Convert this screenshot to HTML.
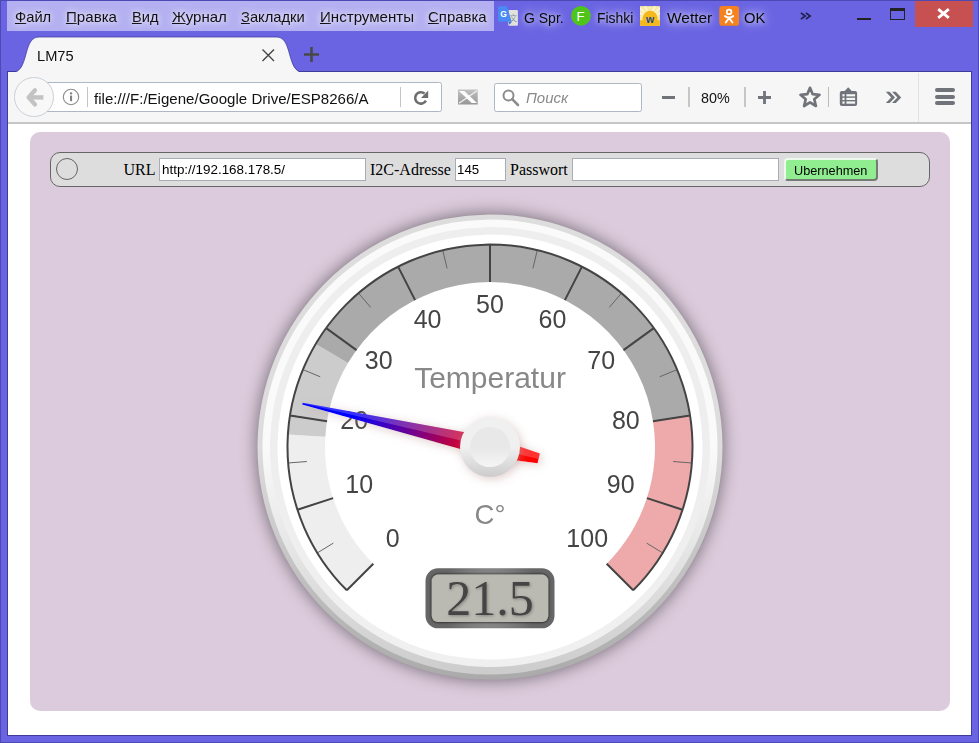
<!DOCTYPE html>
<html lang="de"><head><meta charset="utf-8"><title>LM75</title>
<style>
html,body{margin:0;padding:0}
body{width:979px;height:743px;overflow:hidden;position:relative;background:#6a64e2;font-family:"Liberation Sans",Arial,sans-serif;color:#000}
.abs,.t{position:absolute}
.t{white-space:nowrap;line-height:1;transform-origin:0 0}
#frame{left:0;top:0;width:977px;height:741px;border:1px solid #4c48b4}
#menubar{left:7px;top:1px;width:487px;height:30px;background:#b4b0f1}
.menu{font-size:15px;top:9px;color:#111;text-shadow:0 0 7px rgba(255,255,255,.7),0 0 11px rgba(255,255,255,.5),0 0 4px rgba(255,255,255,.3)}
.menu u{text-decoration:underline;text-underline-offset:1px}
.bm{font-size:15px;top:10px;color:#0a0a0a;text-shadow:0 0 9px rgba(255,255,255,.8),0 0 14px rgba(255,255,255,.55),0 0 5px rgba(255,255,255,.35)}
#nav{left:8px;top:72px;width:963px;height:50px;background:#f6f6f6}
#navline{left:8px;top:122px;width:963px;height:2px;background:#c6c6c6}
#content{left:8px;top:124px;width:963px;height:611px;background:#fff}
#inner{left:7px;top:71px;width:965px;height:665px;background:#3f3c99}
#panel{left:30px;top:132px;width:920px;height:579px;background:#dccbdc;border-radius:10px}
#bar{left:50px;top:152px;width:878px;height:33px;background:#ddd;border:1px solid #666;border-radius:10px}
.lbl{font-family:"Liberation Serif","Times New Roman",serif;font-size:16px;color:#000}
.inp{background:#fff;border:1px solid #a8acb5;box-sizing:border-box;height:23px;top:158px}
.inptxt{font-size:12.8px;color:#000}
.gauge{position:absolute;left:240px;top:197px;overflow:visible;will-change:transform}
#urlbar{left:38px;top:82px;width:402px;height:28px;background:#fff;border:1px solid #aeb7c4;border-radius:2.5px;box-sizing:content-box}
#search{left:494px;top:83px;width:146px;height:27px;background:#fff;border:1px solid #aeb7c4;border-radius:2.5px}
.sep{width:1px;background:#c4c4c4}
</style></head><body>
<div id="frame" class="abs"></div>
<div id="menubar" class="abs"></div>
<span class="t menu" style="left:14.6px;transform:scaleX(0.9813);"><u>Ф</u>айл</span>
<span class="t menu" style="left:65.7px;transform:scaleX(1.0065);"><u>П</u>равка</span>
<span class="t menu" style="left:131.6px;transform:scaleX(0.9758);"><u>В</u>ид</span>
<span class="t menu" style="left:172.2px;transform:scaleX(1.0009);"><u>Ж</u>урнал</span>
<span class="t menu" style="left:241.2px;transform:scaleX(0.9825);"><u>З</u>акладки</span>
<span class="t menu" style="left:319.8px;transform:scaleX(1.0061);"><u>И</u>нструменты</span>
<span class="t menu" style="left:428.4px;transform:scaleX(0.9956);"><u>С</u>правка</span>
<!-- bookmarks -->
<svg class="abs" style="left:496px;top:4px" width="24" height="24" viewBox="496 4 24 24"><rect x="508.3" y="10.1" width="9.6" height="15.6" rx="1" fill="#e3e2da"/><path d="M508.4 21.4H512L509.6 24.8Z" fill="#3b6fd1"/><text x="509.6" y="21" font-size="7.5" fill="#7f95a5" font-family="Liberation Sans,Noto Sans CJK SC,sans-serif">文</text><path d="M499 6.2H506.2Q507 6.2 507.3 7.1L511.3 20.4Q511.6 21.4 510.5 21.4H499Q498 21.4 498 20.4V7.2Q498 6.2 499 6.2Z" fill="#4a8af4"/><text x="500.3" y="17" font-size="8.5" font-weight="bold" fill="#fff" font-family="Liberation Sans,sans-serif">G</text></svg>
<span class="t bm" style="left:523.6px;transform:scaleX(0.9334);">G Spr.</span>
<svg class="abs" style="left:570px;top:5px" width="22" height="22" viewBox="570 5 22 22"><circle cx="581" cy="15.8" r="9.9" fill="#4fc41a"/><text x="580.6" y="20.6" text-anchor="middle" font-size="13.2" fill="#fff" font-family="Liberation Sans,sans-serif">F</text></svg>
<span class="t bm" style="left:596.6px;transform:scaleX(0.9267);">Fishki</span>
<svg class="abs" style="left:640px;top:6px" width="20" height="20" viewBox="640 6 20 20"><rect x="640" y="6.1" width="19.9" height="19.6" fill="#f8e9a6"/><path d="M650 18L640 8M650 18L645 6M650 18L655 6M650 18L660 8M650 18L640 13M650 18L660 13" stroke="#fdf6d6" stroke-width="1.6"/><circle cx="650.1" cy="18.4" r="7.6" fill="#f6b91c"/><rect x="640" y="20.2" width="19.9" height="5.5" fill="#f6b91c"/><text x="650" y="23.4" text-anchor="middle" font-size="10.5" font-weight="bold" fill="#1d4a86" font-family="Liberation Sans,sans-serif">w</text></svg>
<span class="t bm" style="left:666.8px;transform:scaleX(1.0295);">Wetter</span>
<svg class="abs" style="left:719px;top:6px" width="21" height="20" viewBox="719 6 21 20"><rect x="719.3" y="6.1" width="19.8" height="19.6" rx="2.8" fill="#f5821f"/><circle cx="729.1" cy="11.9" r="2.3" fill="none" stroke="#fff" stroke-width="1.8"/><path d="M725 16.1Q729.1 19 733.2 16.1M729.1 18L725.8 22.4M729.1 18L732.4 22.4" fill="none" stroke="#fff" stroke-width="1.9" stroke-linecap="round"/></svg>
<span class="t bm" style="left:744.2px;transform:scaleX(0.9867);">OK</span>
<svg class="abs" style="left:799px;top:10px" width="14" height="12" viewBox="799 10 14 12"><path d="M801.4 13.3L805.2 16L801.4 18.7M806.4 13.3L810.2 16L806.4 18.7" fill="none" stroke="#25234f" stroke-width="1.7" stroke-linecap="round"/></svg>
<!-- window buttons -->
<div class="abs" style="left:857px;top:18px;width:14px;height:2px;background:#222"></div>
<div class="abs" style="left:890px;top:8px;width:13px;height:8px;border:1px solid #222;border-top-width:3px"></div>
<div class="abs" style="left:915px;top:1px;width:58px;height:26px;background:#c75050"></div>
<svg class="abs" style="left:936px;top:7px" width="15" height="13" viewBox="0 0 15 13"><path d="M2.2 2.2L12.8 10.8M12.8 2.2L2.2 10.8" stroke="#fff" stroke-width="2.9" fill="none"/></svg>
<!-- tab -->
<div id="inner" class="abs"></div>
<svg class="abs" style="left:0;top:30px" width="320" height="44" viewBox="0 30 320 44"><path d="M8 72.5L12.5 72.5C20.5 72.5 23 65 26 54C29 43 31.5 37 39.5 37L276 37C284 37 286.5 43 289.5 54C292.5 65 295 72.5 303 72.5L308 72.5Z" fill="#f6f6f6"/><path d="M8 72L12.5 72C20.5 72 23 65 26 54C29 43 31.5 37 39.5 37L276 37C284 37 286.5 43 289.5 54C292.5 65 295 72 303 72L308 72" fill="none" stroke="#3f3c9c" stroke-opacity=".75" stroke-width="1"/></svg>
<span class="t" style="left:37.4px;transform:scaleX(0.9752);top:48px;font-size:15px;color:#111">LM75</span>
<svg class="abs" style="left:261px;top:48px" width="15" height="15" viewBox="0 0 15 15"><path d="M1.5 1.5L13 13M13 1.5L1.5 13" stroke="#444" stroke-width="1.4" fill="none"/></svg>
<svg class="abs" style="left:303.2px;top:45.8px" width="17" height="17" viewBox="0 0 17 17"><path d="M8.5 1V16M1 8.5H16" stroke="#484848" stroke-width="2.6" fill="none"/></svg>
<!-- nav bar -->
<div id="nav" class="abs"></div>
<div id="navline" class="abs"></div>
<div id="urlbar" class="abs"></div>
<div class="abs" style="left:14.4px;top:77.4px;width:37.6px;height:37.6px;border-radius:50%;background:#f8f8f8;border:1px solid #c9d0d8"></div>
<svg class="abs" style="left:24px;top:86px" width="22" height="23" viewBox="0 0 22 23"><path d="M11 4.3L4.6 11.4L11 18.5" fill="none" stroke="#c3c3c3" stroke-width="4.3" stroke-linejoin="round" stroke-linecap="round"/><path d="M5 11.4H19.4" fill="none" stroke="#c3c3c3" stroke-width="4.4"/></svg>
<svg class="abs" style="left:62px;top:88px" width="18" height="18" viewBox="0 0 18 18"><circle cx="9" cy="9" r="7.7" fill="none" stroke="#8c8c8c" stroke-width="1.1"/><rect x="8" y="7.4" width="2.1" height="5.8" rx=".6" fill="#808080"/><rect x="7.9" y="4.2" width="2.3" height="2.2" rx="1" fill="#808080"/></svg>
<div class="abs sep" style="left:87px;top:87px;height:20px"></div>
<span class="t" style="left:94.2px;transform:scaleX(1.0041);top:91px;font-size:15px;color:#111">file:///F:/Eigene/Google Drive/ESP8266/A</span>
<div class="abs sep" style="left:400px;top:87px;height:20px"></div>
<svg class="abs" style="left:410px;top:88px" width="20" height="20" viewBox="410 88 20 20"><path d="M424.6 93.6A5.7 5.7 0 1 0 425.9 100.6" fill="none" stroke="#6e6e6e" stroke-width="2.6"/><path d="M421 98H428.2V90.6Z" fill="#6e6e6e"/></svg>
<svg class="abs" style="left:458px;top:89px" width="20" height="16" viewBox="0 0 20 16"><defs><linearGradient id="mg" x1="0" y1="0" x2="0" y2="1"><stop offset="0" stop-color="#c2c2c2"/><stop offset="1" stop-color="#969696"/></linearGradient></defs><rect x="0" y="0.5" width="19.7" height="15" fill="url(#mg)"/><path d="M1 14.2L19 1.8" stroke="#f2f2f2" stroke-width="1.2" fill="none"/><path d="M0.9 2L6.3 2L19.1 14L13.7 14Z" fill="#fdfdfd"/></svg>
<div id="search" class="abs"></div>
<svg class="abs" style="left:501px;top:88px" width="20" height="20" viewBox="0 0 20 20"><circle cx="7.5" cy="7.5" r="5" fill="none" stroke="#8c8c8c" stroke-width="2"/><path d="M11.2 11.2L17 17" stroke="#8c8c8c" stroke-width="2.6" stroke-linecap="round"/></svg>
<span class="t" style="left:525.5px;transform:scaleX(0.9967);top:90px;font-size:15px;font-style:italic;color:#8a8a8a">Поиск</span>
<div class="abs" style="left:662px;top:96px;width:13px;height:3px;background:#70747a"></div>
<div class="abs sep" style="left:688px;top:87px;height:20px;width:2px;background:#c6c6c6"></div>
<span class="t" style="left:701.3px;transform:scaleX(0.9557);top:90px;font-size:15px;color:#111">80%</span>
<div class="abs sep" style="left:744px;top:87px;height:20px;width:2px;background:#c6c6c6"></div>
<svg class="abs" style="left:757px;top:90px" width="15" height="15" viewBox="0 0 15 15"><path d="M7.5 1V14M1 7.5H14" stroke="#70747a" stroke-width="2.8" fill="none"/></svg>
<svg class="abs" style="left:798px;top:85px" width="24" height="24" viewBox="0 0 24 24"><path d="M12 2.8L14.7 9.2L21.5 9.8L16.3 14.3L17.9 21L12 17.4L6.1 21L7.7 14.3L2.5 9.8L9.3 9.2Z" fill="none" stroke="#70747a" stroke-width="2.7" stroke-linejoin="round"/></svg>
<div class="abs sep" style="left:828px;top:87px;height:20px;background:#bbb"></div>
<svg class="abs" style="left:838px;top:86px" width="21" height="22" viewBox="838 86 21 22"><path d="M844.2 91.6L848.2 87.2L852.2 91.6Z" fill="#70747a"/><rect x="839.8" y="91.1" width="17.3" height="15" rx="2" fill="#70747a"/><g fill="#f6f6f6"><rect x="842.4" y="94.2" width="2.2" height="2.2"/><rect x="846.4" y="94.2" width="8.7" height="2.2"/><rect x="842.4" y="97.8" width="2.2" height="2.2"/><rect x="846.4" y="97.8" width="8.7" height="2.2"/><rect x="842.4" y="101.4" width="2.2" height="2.3"/><rect x="846.4" y="101.4" width="8.7" height="2.3"/></g></svg>
<svg class="abs" style="left:884px;top:90px" width="19" height="15" viewBox="884 90 19 15"><path d="M885.8 91.8H889.6L895 97.4L889.6 103H885.8L891.2 97.4ZM892 91.8H895.8L901.2 97.4L895.8 103H892L897.4 97.4Z" fill="#70747a"/></svg>
<div class="abs sep" style="left:918px;top:73px;height:49px;background:#e2e2e2"></div>
<div class="abs" style="left:935px;top:88.3px;width:20px;height:3.8px;border-radius:2px;background:#70747a"></div>
<div class="abs" style="left:935px;top:94.9px;width:20px;height:3.8px;border-radius:2px;background:#70747a"></div>
<div class="abs" style="left:935px;top:101.4px;width:20px;height:3.8px;border-radius:2px;background:#70747a"></div>
<!-- content -->
<div id="content" class="abs"></div>
<div id="panel" class="abs"></div>
<div id="bar" class="abs"></div>
<div class="abs" style="left:56px;top:158px;width:20px;height:20px;border:1px solid #666;border-radius:50%;background:#ddd"></div>
<span class="t lbl" style="left:123.5px;top:162px">URL</span>
<div class="abs inp" style="left:159px;width:207px"></div>
<span class="t inptxt" style="left:162.0px;transform:scaleX(1.0476);top:164px">http://192.168.178.5/</span>
<span class="t lbl" style="left:370px;top:162px">I2C-Adresse</span>
<div class="abs inp" style="left:455px;width:51px"></div>
<span class="t inptxt" style="left:457.3px;transform:scaleX(1.0394);top:164px">145</span>
<span class="t lbl" style="left:510px;top:162px">Passwort</span>
<div class="abs inp" style="left:572px;width:207px"></div>
<div class="abs" style="left:784px;top:158px;width:94px;height:23px;background:#90ee90;border:2px solid;border-color:#eef9ee #737b73 #737b73 #eef9ee;border-radius:4px;box-sizing:border-box"></div>
<span class="t inptxt" style="left:793.6px;transform:scaleX(0.9921);top:165px;font-size:12.8px">Ubernehmen</span>
<svg class="gauge" width="500" height="500" viewBox="0 0 500 500"><defs>
<linearGradient id="g0" gradientUnits="userSpaceOnUse" x1="0" y1="0" x2="0" y2="232.5"><stop offset="0" stop-color="#ddd"/><stop offset="1" stop-color="#aaa"/></linearGradient>
<linearGradient id="g1" gradientUnits="userSpaceOnUse" x1="0" y1="0" x2="0" y2="227.5"><stop offset="0" stop-color="#fafafa"/><stop offset="1" stop-color="#ccc"/></linearGradient>
<linearGradient id="g2" gradientUnits="userSpaceOnUse" x1="0" y1="0" x2="0" y2="220"><stop offset="0" stop-color="#eee"/><stop offset="1" stop-color="#f0f0f0"/></linearGradient>
<linearGradient id="gn" gradientUnits="userSpaceOnUse" x1="0" y1="0" x2="0" y2="142.5"><stop offset="0" stop-color="#f00"/><stop offset="1" stop-color="#00f"/></linearGradient>
<linearGradient id="gc1" gradientUnits="userSpaceOnUse" x1="0" y1="0" x2="0" y2="30"><stop offset="0" stop-color="#f0f0f0"/><stop offset="1" stop-color="#ccc"/></linearGradient>
<linearGradient id="gc2" gradientUnits="userSpaceOnUse" x1="0" y1="0" x2="0" y2="20"><stop offset="0" stop-color="#e8e8e8"/><stop offset="1" stop-color="#f5f5f5"/></linearGradient>
<radialGradient id="gv" gradientUnits="userSpaceOnUse" cx="0" cy="151.875" r="50"><stop offset="0" stop-color="#888"/><stop offset="0.5" stop-color="#888"/><stop offset="1" stop-color="#666"/></radialGradient>
<filter id="fs" x="-20%" y="-20%" width="140%" height="140%"><feGaussianBlur stdDeviation="8.75"/></filter>
<filter id="fn" x="-30%" y="-30%" width="160%" height="160%"><feDropShadow dx="2" dy="2" stdDeviation="5" flood-color="rgb(188,143,143)" flood-opacity="0.45"/></filter>
<filter id="fb" x="-10%" y="-20%" width="120%" height="140%"><feDropShadow dx="0" dy="0" stdDeviation="1.5" flood-color="#000" flood-opacity="1"/></filter>
<filter id="ft" x="-10%" y="-20%" width="120%" height="140%"><feDropShadow dx="1" dy="1" stdDeviation="1.5" flood-color="#000" flood-opacity="0.3"/></filter>
</defs>
<g transform="translate(250 250.1)">
<circle r="232.5" fill="#000" fill-opacity="0.5" filter="url(#fs)"/>
<circle r="232.5" fill="url(#g0)"/>
<circle r="227.5" fill="url(#g1)"/>
<circle r="220" fill="url(#g2)"/>
<circle r="212.5" fill="#fff"/>
<path d="M-143.19 143.19A202.5 202.5 0 0 1 -202.1 -12.72L-164.67 -10.36A165 165 0 0 0 -116.67 116.67Z" fill="#eee"/>
<path d="M-202.1 -12.72A202.5 202.5 0 0 1 -174.3 -103.08L-142.02 -83.99A165 165 0 0 0 -164.67 -10.36Z" fill="#ccc"/>
<path d="M-174.3 -103.08A202.5 202.5 0 0 1 200.01 -31.68L162.97 -25.81A165 165 0 0 0 -142.02 -83.99Z" fill="#aaa"/>
<path d="M200.01 -31.68A202.5 202.5 0 0 1 143.19 143.19L116.67 116.67A165 165 0 0 0 162.97 -25.81Z" fill="#eaa"/>
<path d="M-143.19 143.19L-129.93 129.93M-172.66 105.81L-156.67 96.01M-192.59 62.58L-174.76 56.78M-201.88 15.89L-183.18 14.42M-200.01 -31.68L-181.49 -28.74M-187.09 -77.49L-169.76 -70.32M-163.83 -119.03L-148.66 -108.01M-131.51 -153.98L-119.34 -139.72M-91.93 -180.43L-83.42 -163.72M-47.27 -196.9L-42.9 -178.67M-0 -202.5L-0 -183.75M47.27 -196.9L42.9 -178.67M91.93 -180.43L83.42 -163.72M131.51 -153.98L119.34 -139.72M163.83 -119.03L148.66 -108.01M187.09 -77.49L169.76 -70.32M200.01 -31.68L181.49 -28.74M201.88 15.89L183.18 14.42M192.59 62.58L174.76 56.78M172.66 105.81L156.67 96.01" stroke="#666" stroke-width="1" fill="none"/>
<path d="M-143.19 143.19L-116.67 116.67M-192.59 62.58L-156.92 50.99M-200.01 -31.68L-162.97 -25.81M-163.83 -119.03L-133.49 -96.98M-91.93 -180.43L-74.91 -147.02M-0 -202.5L-0 -165M91.93 -180.43L74.91 -147.02M163.83 -119.03L133.49 -96.98M200.01 -31.68L162.97 -25.81M192.59 62.58L156.92 50.99M143.19 143.19L116.67 116.67M-143.19 143.19A202.5 202.5 0 1 1 143.19 143.19" stroke="#444" stroke-width="2" fill="none"/>
<g font-family="'Liberation Sans',Arial,sans-serif" text-anchor="middle">
<g font-size="25" fill="#444">
<text x="-97.23" y="100.23">0</text>
<text x="-130.77" y="45.49">10</text>
<text x="-135.81" y="-18.51">20</text>
<text x="-111.24" y="-77.82">30</text>
<text x="-62.42" y="-119.51">40</text>
<text x="-0" y="-134.5">50</text>
<text x="62.42" y="-119.51">60</text>
<text x="111.24" y="-77.82">70</text>
<text x="135.81" y="-18.51">80</text>
<text x="130.77" y="45.49">90</text>
<text x="97.23" y="100.23">100</text>
</g>
<text x="0" y="-58.82" font-size="30" fill="#888">Temperatur</text>
<text x="0" y="76.92" font-size="27.5" fill="#888">C°</text>
</g>
<g filter="url(#fn)"><g transform="rotate(103.05)">
<path d="M-5 -50L-10 0L-1 192.5L1 192.5L10 0L5 -50Z" fill="url(#gn)"/>
<path d="M-0.5 192.5L-1 192.5L-10 0L-5 -50L0.5 -50Z" fill="#fff" fill-opacity="0.2"/>
</g></g>
<circle r="30" fill="url(#gc1)" filter="url(#fn)"/>
<circle r="20" fill="url(#gc2)"/>
<rect x="-58.25" y="127.5" width="116.5" height="47.5" rx="6.25" fill="none" stroke="url(#gv)" stroke-width="12.5"/>
<rect x="-58.25" y="127.5" width="116.5" height="47.5" rx="6.25" fill="#babab2" filter="url(#fb)"/>
<text x="0" y="167.5" font-family="'Liberation Serif','Times New Roman',serif" font-size="50" fill="#444" text-anchor="middle" filter="url(#ft)">21.5</text>
</g></svg>
</body></html>
